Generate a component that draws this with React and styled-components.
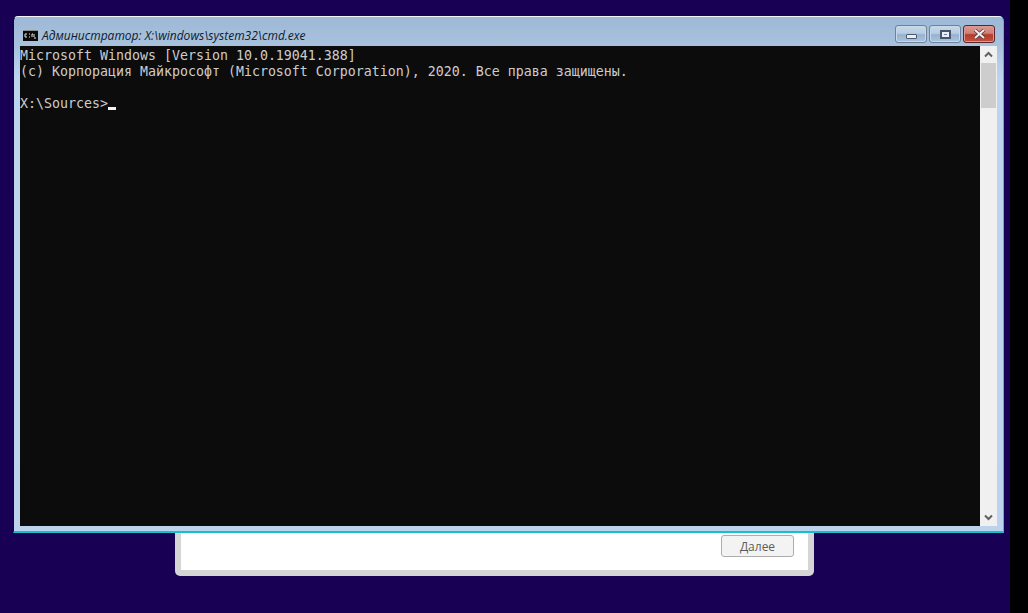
import styled, { createGlobalStyle } from "styled-components";

const GlobalStyle = createGlobalStyle`
  html, body {
    margin: 0;
    padding: 0;
    background: #000;
  }
`;

const Screen = styled.div`
  display: flex;
  width: 1028px;
  height: 613px;
  overflow: hidden;
  background: #000;
`;

const Desktop = styled.div`
  position: relative;
  flex: 0 0 1010px;
  height: 613px;
  background: #180055;
`;

const SetupDialog = styled.div`
  position: absolute;
  left: 175px;
  top: 500px;
  width: 639px;
  height: 76px;
  box-sizing: border-box;
  padding: 0 6px 6px;
  display: flex;
  background: #d5d5d5;
  border-radius: 0 0 5px 5px;
`;

const DialogBody = styled.div`
  flex: 1;
  display: flex;
  justify-content: flex-end;
  align-items: flex-end;
  padding: 0 14px 13px 0;
  background: #fff;
`;

const NextButton = styled.button`
  width: 73px;
  height: 22px;
  padding: 0;
  box-sizing: border-box;
  border: 1px solid #adadad;
  border-radius: 3px;
  background: #f3f3f3;
  color: #5c5c5c;
  font: 12px "Open Sans", "Noto Sans", sans-serif;

  u {
    text-decoration-color: #444;
  }
`;

const CmdWindow = styled.div`
  position: absolute;
  left: 13px;
  top: 16px;
  width: 991px;
  height: 517px;
  box-sizing: border-box;
  display: flex;
  flex-direction: column;
  padding: 0 6px 5px;
  background: linear-gradient(180deg, #9db8d6 0, #a9c3de 30px, #bdd4ee 60px, #bcd3ee 100%);
  border-top: 1px solid #f2f5f8;
  border-left: 1px solid #0b0b1c;
  border-right: 1px solid #35c3dc;
  border-bottom: 2px solid #16bfd0;
  border-radius: 5px 5px 0 0;
`;

const TitleBar = styled.div`
  flex: 0 0 29px;
  display: flex;
  align-items: center;
  gap: 4px;
  padding: 7px 1px 0 3px;
  box-sizing: border-box;
`;

const Title = styled.span`
  flex: 1;
  font: italic 12px "Open Sans", "Noto Sans", sans-serif;
  color: #0c1a2e;
  white-space: nowrap;
`;

const CaptionButtons = styled.div`
  display: flex;
  gap: 2px;
  margin-top: -2px;
  margin-right: 1px;
`;

const CaptionButton = styled.div`
  width: 32px;
  height: 18px;
  box-sizing: border-box;
  display: flex;
  align-items: center;
  justify-content: center;
  border: 1px solid ${(props) => (props.$close ? "#5a2530" : "#6f819b")};
  border-radius: 3px;
  box-shadow: inset 0 0 0 1px ${(props) => (props.$close ? "#d99a94" : "#c6d8ea")};
  background: ${(props) =>
    props.$close
      ? "linear-gradient(180deg, #dc9a92 0, #d07f76 45%, #b23c2a 55%, #c2533f 100%)"
      : "linear-gradient(180deg, #c7d8ea 0, #b7cde3 45%, #95b3d0 55%, #aac4de 100%)"};
`;

const MinimizeGlyph = styled.div`
  width: 11px;
  height: 5px;
  margin-top: 5px;
  box-sizing: border-box;
  background: #ececec;
  border: 1px solid #4c5a70;
  border-radius: 1px;
`;

const RestoreGlyph = styled.div`
  width: 11px;
  height: 9px;
  box-sizing: border-box;
  background: #e6edf4;
  border: 2px solid #46536a;
  display: flex;
  align-items: center;
  justify-content: center;

  &::after {
    content: "";
    width: 3px;
    height: 1px;
    background: #6f819b;
  }
`;

const ConsoleRow = styled.div`
  flex: 1;
  display: flex;
  min-height: 0;
`;

const Console = styled.pre`
  flex: 1;
  margin: 0;
  padding-top: 2px;
  background: #0c0c0c;
  color: #cccccc;
  font: 13.29px/16px "DejaVu Sans Mono", "Liberation Mono", monospace;
  overflow: hidden;
`;

const Caret = styled.span`
  display: inline-block;
  width: 8px;
  height: 3px;
  background: #f2f2f2;
  vertical-align: -2px;
`;

const Scrollbar = styled.div`
  flex: 0 0 17px;
  display: flex;
  flex-direction: column;
  background: #f0f0f0;
`;

const ScrollArrow = styled.div`
  flex: 0 0 17px;
  display: flex;
  align-items: center;
  justify-content: center;
`;

const ScrollThumb = styled.div`
  flex: 0 0 45px;
  margin: 0 1px;
  background: #cdcdcd;
`;

const ScrollTrack = styled.div`
  flex: 1;
`;

const ConsoleIcon = () => (
  <svg width="15" height="11" viewBox="0 0 15 11" style={{ flex: "none" }}>
    <rect x="0" y="0" width="15" height="11" fill="#0a0a0a" />
    <rect x="0" y="0" width="15" height="1" fill="#8d8d8d" />
    <path d="M2 4h2M2 4v3M2 7h2M6 4h1M6 7h1M9 4v3M9 4h1M11 4v3M11 8h2" stroke="#e8e8e8" strokeWidth="1" fill="none" />
  </svg>
);

const CloseIcon = () => (
  <svg width="13" height="10" viewBox="0 0 13 10">
    <path d="M2 1l9 8M11 1l-9 8" stroke="#4a3338" strokeWidth="3.4" fill="none" />
    <path d="M2 1l9 8M11 1l-9 8" stroke="#f1f1f1" strokeWidth="2" fill="none" />
  </svg>
);

const Chevron = ({ down }) => (
  <svg width="9" height="7" viewBox="0 0 9 7">
    <path d={down ? "M1 1.5l3.5 3.5 3.5-3.5" : "M1 5.5l3.5-3.5 3.5 3.5"} stroke="#606060" strokeWidth="2" fill="none" />
  </svg>
);

const App = () => {
  return (
    <Screen>
      <GlobalStyle />
      <Desktop>
        <SetupDialog>
          <DialogBody>
            <NextButton>
              <u>Д</u>алее
            </NextButton>
          </DialogBody>
        </SetupDialog>
        <CmdWindow>
          <TitleBar>
            <ConsoleIcon />
            <Title>Администратор: X:\windows\system32\cmd.exe</Title>
            <CaptionButtons>
              <CaptionButton>
                <MinimizeGlyph />
              </CaptionButton>
              <CaptionButton>
                <RestoreGlyph />
              </CaptionButton>
              <CaptionButton $close>
                <CloseIcon />
              </CaptionButton>
            </CaptionButtons>
          </TitleBar>
          <ConsoleRow>
            <Console>
              {"Microsoft Windows [Version 10.0.19041.388]\n"}
              {"(c) Корпорация Майкрософт (Microsoft Corporation), 2020. Все права защищены.\n"}
              {"\n"}
              {"X:\\Sources>"}
              <Caret />
            </Console>
            <Scrollbar>
              <ScrollArrow>
                <Chevron />
              </ScrollArrow>
              <ScrollThumb />
              <ScrollTrack />
              <ScrollArrow>
                <Chevron down />
              </ScrollArrow>
            </Scrollbar>
          </ConsoleRow>
        </CmdWindow>
      </Desktop>
    </Screen>
  );
};

export default App;
